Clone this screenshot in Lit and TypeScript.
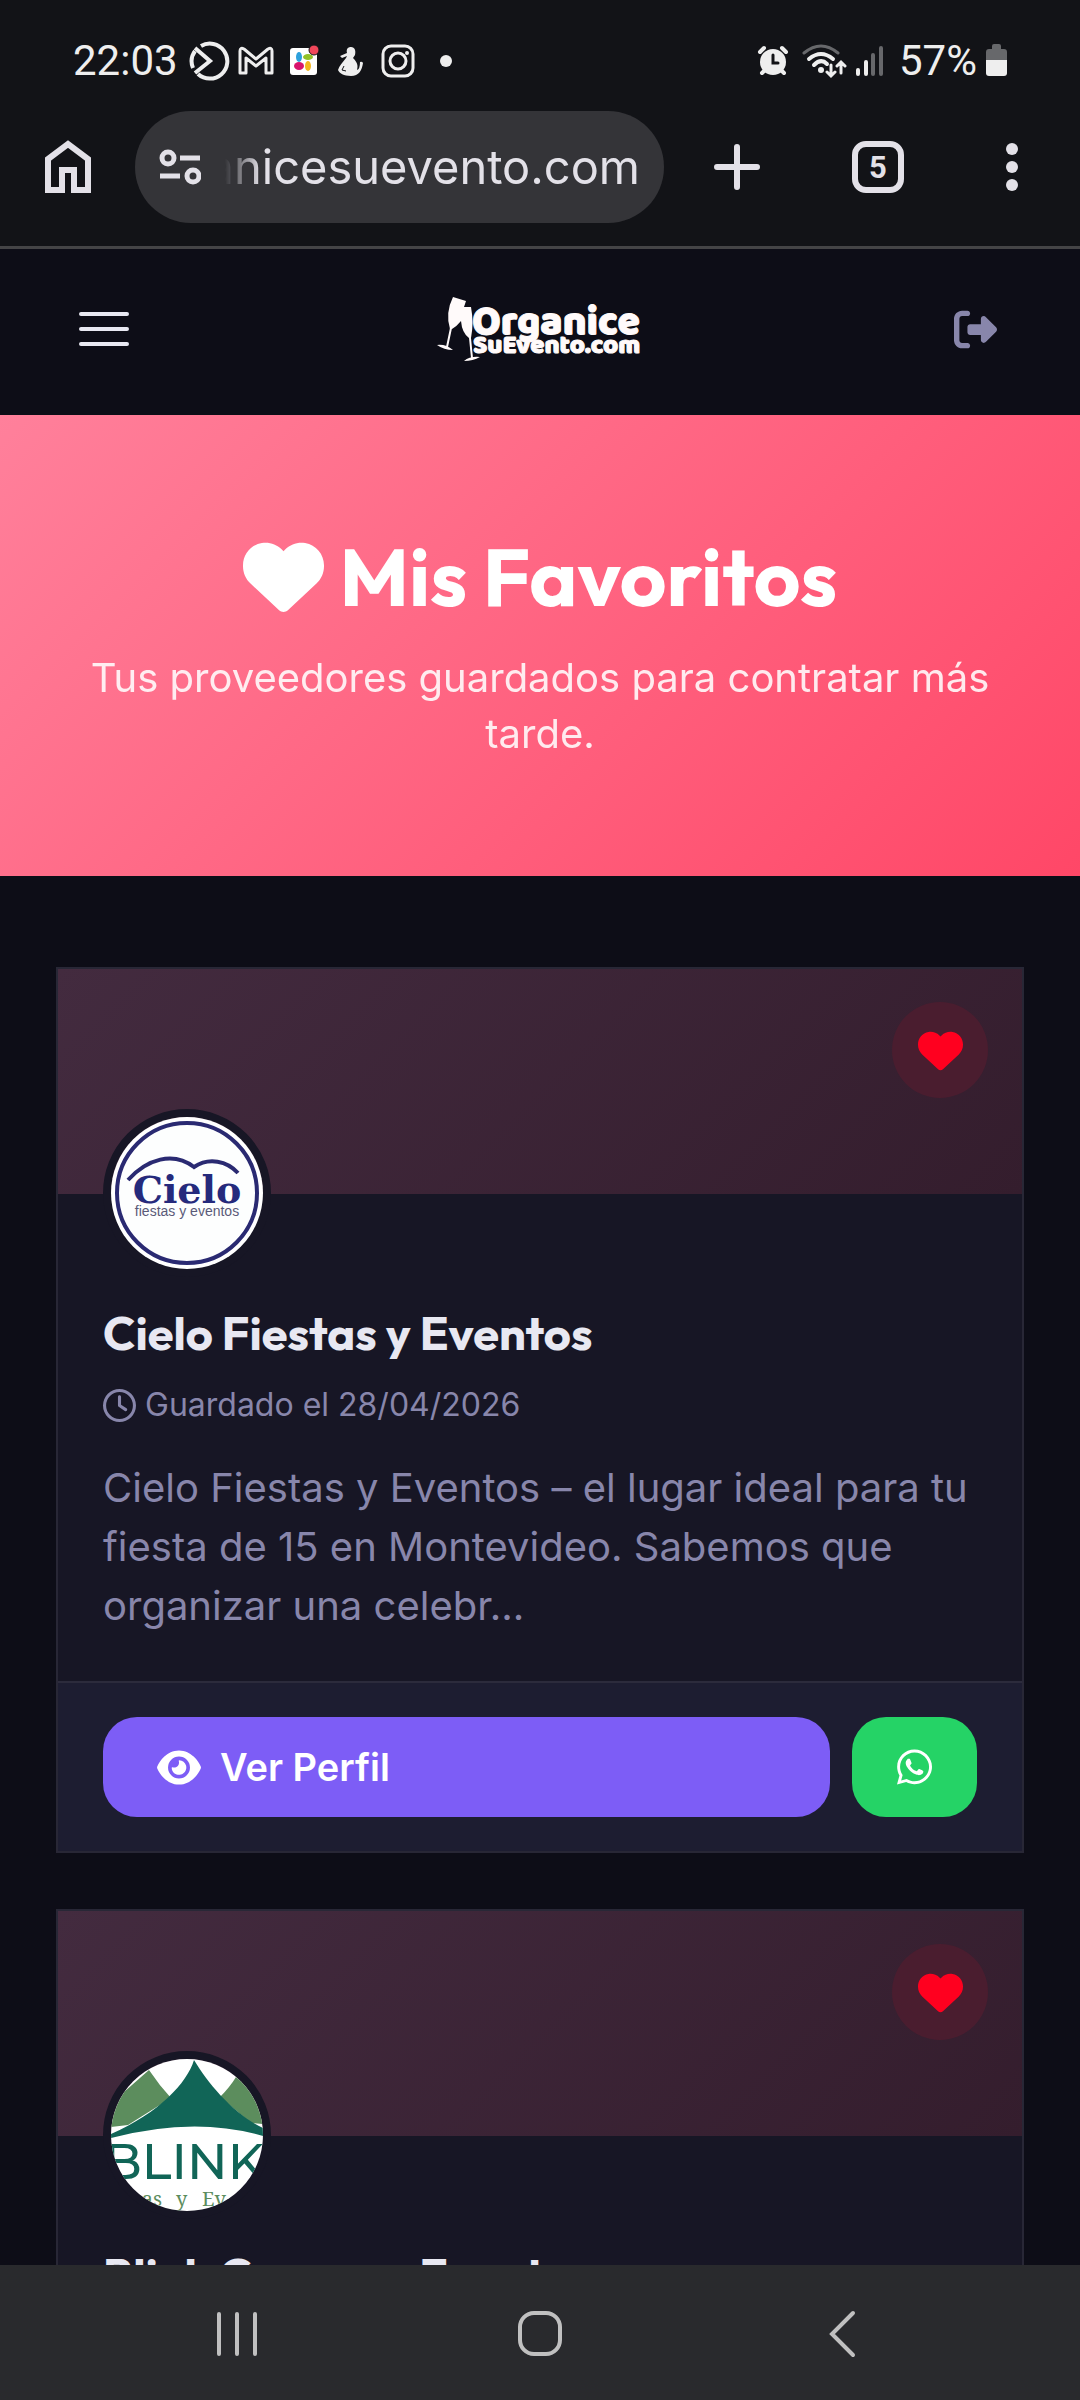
import { LitElement, css, html, svg } from "lit";
import { customElement, property } from "lit/decorators.js";

const HEART =
    "M47.6 300.4L228.3 469.1c7.5 7 17.4 10.9 27.7 10.9s20.2-3.9 27.7-10.9L464.4 300.4c30.4-28.3 47.6-68 47.6-109.5v-5.8c0-69.9-50.5-129.5-119.4-141C347 36.5 300.6 51.4 268 84L256 96 244 84c-32.6-32.6-79-47.5-124.6-39.9C50.5 55.6 0 115.2 0 185.1v5.8c0 41.5 17.2 81.2 47.6 109.5z";
const EYE =
    "M288 32c-80.8 0-145.5 36.8-192.6 80.6C48.6 156 17.3 208 2.5 243.7c-3.3 7.9-3.3 16.7 0 24.6C17.3 304 48.6 356 95.4 399.4C142.5 443.2 207.2 480 288 480s145.5-36.8 192.6-80.6c46.8-43.5 78.1-95.4 93-131.1c3.3-7.9 3.3-16.7 0-24.6c-14.9-35.7-46.2-87.7-93-131.1C433.5 68.8 368.8 32 288 32zM144 256a144 144 0 1 1 288 0 144 144 0 1 1 -288 0zm144-64c0 35.3-28.7 64-64 64c-7.1 0-13.9-1.2-20.3-3.3c-5.5-1.8-11.9 1.6-11.7 7.4c.3 6.9 1.3 13.8 3.2 20.7c13.7 51.2 66.4 81.6 117.6 67.9s81.6-66.4 67.9-117.6c-11.1-41.5-47.8-69.4-88.6-71.1c-5.8-.2-9.2 6.1-7.4 11.7c2.1 6.4 3.3 13.2 3.3 20.3z";
const WHATSAPP =
    "M380.9 97.1C339 55.1 283.2 32 223.9 32c-122.4 0-222 99.6-222 222 0 39.1 10.2 77.3 29.6 111L0 480l117.7-30.9c32.4 17.7 68.9 27 106.1 27h.1c122.3 0 224.1-99.6 224.1-222 0-59.3-25.2-115-67.1-157zm-157 341.6c-33.2 0-65.7-8.9-94-25.7l-6.7-4-69.8 18.3L72 359.2l-4.4-7c-18.5-29.4-28.2-63.3-28.2-98.2 0-101.7 82.8-184.5 184.6-184.5 49.3 0 95.6 19.2 130.4 54.1 34.8 34.9 56.2 81.2 56.1 130.5 0 101.8-84.9 184.6-186.6 184.6zm101.2-138.2c-5.5-2.8-32.8-16.2-37.9-18-5.1-1.9-8.8-2.8-12.5 2.8-3.7 5.6-14.3 18-17.6 21.8-3.2 3.7-6.5 4.2-12 1.4-32.6-16.3-54-29.1-75.5-66-5.7-9.8 5.7-9.1 16.3-30.3 1.8-3.7.9-6.9-.5-9.7-1.4-2.8-12.5-30.1-17.1-41.2-4.5-10.8-9.1-9.3-12.5-9.5-3.2-.2-6.9-.2-10.6-.2-3.7 0-9.7 1.4-14.8 6.9-5.1 5.6-19.4 19-19.4 46.3 0 27.3 19.9 53.7 22.6 57.4 2.8 3.7 39.1 59.7 94.8 83.8 35.2 15.2 49 16.5 66.6 13.9 10.7-1.6 32.8-13.4 37.4-26.4 4.6-13 4.6-24.1 3.2-26.4-1.3-2.5-5-3.9-10.5-6.6z";
const CLOCK =
    "M464 256A208 208 0 1 1 48 256a208 208 0 1 1 416 0zM0 256a256 256 0 1 0 512 0A256 256 0 1 0 0 256zM232 120l0 136c0 8 4 15.5 10.7 20l96 64c11 7.4 25.9 4.4 33.3-6.7s4.4-25.9-6.7-33.3L280 243.2 280 120c0-13.3-10.7-24-24-24s-24 10.7-24 24z";
const LOGOUT =
    "M377.9 105.9L500.7 228.7c7.2 7.2 11.3 17.1 11.3 27.3s-4.1 20.1-11.3 27.3L377.9 406.1c-6.4 6.4-15 9.9-24 9.9c-18.7 0-33.9-15.2-33.9-33.9l0-62.1-128 0c-17.7 0-32-14.3-32-32l0-64c0-17.7 14.3-32 32-32l128 0 0-62.1c0-18.7 15.2-33.9 33.9-33.9c9 0 17.6 3.6 24 9.9zM160 96L96 96c-17.7 0-32 14.3-32 32l0 256c0 17.7 14.3 32 32 32l64 0c17.7 0 32 14.3 32 32s-14.3 32-32 32l-64 0c-53 0-96-43-96-96L0 128C0 75 43 32 96 32l64 0c17.7 0 32 14.3 32 32s-14.3 32-32 32z";

interface Provider {
    id: string;
    name: string;
    saved: string;
    description: string;
}

const PROVIDERS: Provider[] = [
    {
        id: "cielo",
        name: "Cielo Fiestas y Eventos",
        saved: "28/04/2026",
        description:
            "Cielo Fiestas y Eventos – el lugar ideal para tu fiesta de 15 en Montevideo. Sabemos que organizar una celebr...",
    },
    {
        id: "blink",
        name: "Blink Carpas y Eventos",
        saved: "28/04/2026",
        description: "",
    },
];

const cieloLogo = svg`
  <rect width="152" height="152" fill="#fff" />
  <circle cx="76" cy="76" r="70" fill="#fdfefe" stroke="#2a2a72" stroke-width="4" />
  <path d="M17 63C36 42 62 34 83 50C98 40 116 44 127 56" fill="none" stroke="#2a2a72" stroke-width="4" />
  <text class="cielo" x="76" y="86" text-anchor="middle">Cielo</text>
  <text class="cieloSub" x="76" y="99" text-anchor="middle">fiestas y eventos</text>
`;

const blinkLogo = svg`
  <rect width="152" height="152" fill="#fff" />
  <path d="M38 11L13 33L0 54V68L17 66L60 39Q48 26 38 11ZM125 18Q119 28 109 38L140 64L152 65V40Z" fill="#5c8d5d" />
  <path d="M83 1C76 24 48 54 0 75V79Q84 57 152 77V69C124 56 98 26 83 1Z" fill="#116557" />
  <text class="blink" x="-7" y="120">BLINK</text>
  <text class="blinkSub" x="51" y="147" text-anchor="end">as</text>
  <text class="blinkSub" x="65" y="147">y</text>
  <text class="blinkSub" x="91" y="147">Ev</text>
`;

@customElement("provider-card")
export class ProviderCard extends LitElement {
    @property({ attribute: false }) provider!: Provider;

    static styles = [
        css`
      :host {
        display: block;
        background: #171625;
        border: 2px solid #282736;
      }
      .cover {
        display: flex;
        justify-content: flex-end;
        align-items: flex-start;
        height: 225px;
        box-sizing: border-box;
        padding: 33px 34px;
        background: linear-gradient(135deg, #432b3f, #341d2d);
      }
      .favorite {
        display: grid;
        place-items: center;
        width: 96px;
        height: 96px;
        padding: 0;
        border: 0;
        border-radius: 50%;
        background: #4a1d2f;
        color: #ff001f;
      }
      .favorite svg {
        width: 45px;
        height: 45px;
      }
      .body {
        padding: 0 45px 46px;
      }
      .avatar {
        display: block;
        position: relative;
        width: 152px;
        height: 152px;
        margin: -85px 0 0;
        border: 8px solid #171625;
        border-radius: 50%;
      }
      .name {
        margin: 26px 0 0;
        color: #e8e8f2;
        font: 700 47px/60px "Outfit", "Lato", sans-serif;
      }
      .saved {
        display: flex;
        align-items: center;
        gap: 9px;
        margin: 22px 0 0;
        font-size: 32px;
        line-height: 40px;
      }
      .saved svg {
        width: 33px;
        height: 33px;
      }
      .description {
        margin: 33px 0 0;
        font-size: 40px;
        line-height: 59px;
      }
      .actions {
        display: flex;
        gap: 22px;
        padding: 34px 45px;
        border-top: 2px solid #2c2b3c;
        background: #1d1d31;
      }
      .profile {
        display: flex;
        flex: 1;
        align-items: center;
        gap: 19px;
        height: 100px;
        padding: 0 54px;
        border-radius: 34px;
        background: #7d5df6;
        color: #fff;
        font-size: 38px;
        font-weight: 600;
        text-decoration: none;
      }
      .profile svg {
        width: 44px;
        height: 39px;
      }
      .whatsapp {
        display: grid;
        place-items: center;
        width: 125px;
        border-radius: 34px;
        background: #25d366;
        color: #fff;
      }
      .whatsapp svg {
        width: 35px;
        height: 40px;
      }
      .cielo {
        fill: #252a7c;
        font: 700 38px "DejaVu Serif", serif;
      }
      .cieloSub {
        fill: #5a5a78;
        font: 14px "Liberation Sans", sans-serif;
      }
      .blink {
        fill: #116557;
        font: 500 50px "Montserrat", "DejaVu Sans", sans-serif;
      }
      .blinkSub {
        fill: #5c8d5d;
        font: 20px "Noto Serif", "Liberation Serif", serif;
      }
    `,
    ];

    render() {
        const { id, name, saved, description } = this.provider;
        return html`
      <div class="cover">
        <button class="favorite" aria-label="Quitar de favoritos">
          <svg viewBox="0 0 512 512" fill="currentColor"><path d=${HEART} /></svg>
        </button>
      </div>
      <div class="body">
        <svg class="avatar" viewBox="0 0 152 152" role="img" aria-label=${name}>
          ${id === "cielo" ? cieloLogo : blinkLogo}
        </svg>
        <h2 class="name">${name}</h2>
        <p class="saved">
          <svg viewBox="0 0 512 512" fill="currentColor"><path d=${CLOCK} /></svg>
          Guardado el ${saved}
        </p>
        <p class="description">${description}</p>
      </div>
      <div class="actions">
        <a class="profile" href="#${id}">
          <svg viewBox="0 0 576 512" fill="currentColor"><path d=${EYE} /></svg>
          Ver Perfil
        </a>
        <a class="whatsapp" href="#whatsapp" aria-label="WhatsApp">
          <svg viewBox="0 0 448 512" fill="currentColor"><path d=${WHATSAPP} /></svg>
        </a>
      </div>
    `;
    }
}

@customElement("app-root")
export class AppRoot extends LitElement {
    static styles = [
        css`
      :host {
        display: flex;
        flex-direction: column;
        height: 100vh;
        overflow: hidden;
        background: #0d0d17;
        color: #8886ab;
        font-family: "Inter", sans-serif;
      }
      button {
        display: grid;
        place-items: center;
        padding: 0;
        border: 0;
        background: none;
        color: inherit;
        font: inherit;
      }
      .chrome {
        flex: none;
        border-bottom: 3px solid #444446;
        background: #121317;
        color: #e3e1e8;
      }
      .status {
        display: flex;
        align-items: center;
        justify-content: space-between;
        height: 51px;
        padding: 35px 71px 25px 73px;
        color: #eee;
        font: 42px/51px "Roboto", sans-serif;
      }
      .group {
        display: flex;
        align-items: center;
        gap: 8px;
      }
      .group svg {
        display: block;
      }
      .toolbar {
        display: flex;
        align-items: center;
        height: 112px;
        padding: 0 52px 23px 37px;
      }
      .url {
        display: flex;
        flex: 1;
        align-items: center;
        gap: 24px;
        min-width: 0;
        height: 112px;
        box-sizing: border-box;
        margin: 0 50px 0 36px;
        padding: 0 24px;
        border-radius: 56px;
        background: #343438;
      }
      .url svg {
        flex: none;
      }
      /* rtl keeps the end of a long address in view */
      .address {
        flex: 1;
        min-width: 0;
        padding: 0;
        border: 0;
        background: none;
        color: inherit;
        direction: rtl;
        font: 47px/60px "Inter", sans-serif;
        mask-image: linear-gradient(90deg, transparent, #000 36px);
      }
      .tools {
        display: flex;
        align-items: center;
        gap: 92px;
      }
      .tab {
        font: 700 31px "Roboto", sans-serif;
      }
      .page {
        flex: 1;
        min-height: 0;
        overflow: hidden;
      }
      .header {
        display: flex;
        align-items: center;
        justify-content: space-between;
        height: 166px;
        box-sizing: border-box;
        padding: 0 83px 6px 77px;
      }
      .brand svg {
        display: block;
      }
      .logo {
        font: 800 41px "Baloo 2", "Lato", sans-serif;
        stroke: #fffafa;
        stroke-width: 1px;
      }
      .logoSub {
        font-size: 26px;
      }
      .hero {
        padding: 113px 80px 114px;
        background: linear-gradient(135deg, #ff809b, #ff4767);
        color: #fff;
        text-align: center;
      }
      .title {
        display: flex;
        align-items: center;
        justify-content: center;
        gap: 16px;
        margin: 0;
        font: 700 81px/96px "Outfit", "Lato", sans-serif;
      }
      .title svg {
        width: 81px;
        height: 81px;
      }
      .subtitle {
        margin: 26px 0 0;
        opacity: 0.88;
        font-size: 40px;
        line-height: 56px;
      }
      .cards {
        display: grid;
        gap: 56px;
        padding: 91px 56px;
      }
      .nav {
        display: flex;
        flex: none;
        justify-content: space-between;
        align-items: center;
        height: 135px;
        padding: 0 218px 0 213px;
        background: #292a2d;
        color: #c0c0c0;
      }
    `,
    ];

    render() {
        return html`
      <div class="chrome">${this._renderStatus()} ${this._renderToolbar()}</div>
      <main class="page">
        <header class="header">
          <button aria-label="Menú">
            <svg width="52" height="36" fill="none" stroke="#e8e8f2" stroke-width="4" stroke-linecap="round">
              <path d="M4 3H50M4 18H50M4 33H50" />
            </svg>
          </button>
          <a class="brand" href="#inicio" aria-label="Organice Su Evento">
            <svg width="210" height="66" fill="#fffafa">
              <path d="M16 1L29 5L27 11H34Q37 27 34 42H32Q25 37 24 25Q20 30 15 33H13Q8 17 16 1Z" />
              <path d="M14 32L10 51M33 42L35 62" stroke="#fffafa" stroke-width="2" />
              <path d="M0 49Q9 48 16 54Q7 54 0 49ZM27 65Q33 60 43 61Q36 65 27 65Z" />
              <text class="logo" x="35" y="38">Organice</text>
              <text class="logo logoSub" x="36" y="57">SuEvento.com</text>
            </svg>
          </a>
          <button aria-label="Salir">
            <svg width="43" height="43" viewBox="0 0 512 512" fill="#8886ab"><path d=${LOGOUT} /></svg>
          </button>
        </header>
        <section class="hero">
          <h1 class="title">
            <svg viewBox="0 0 512 512" fill="currentColor"><path d=${HEART} /></svg>
            Mis Favoritos
          </h1>
          <p class="subtitle">Tus proveedores guardados para contratar más tarde.</p>
        </section>
        <section class="cards">
          ${PROVIDERS.map((p) => html`<provider-card .provider=${p}></provider-card>`)}
        </section>
      </main>
      ${this._renderNav()}
    `;
    }

    private _renderStatus() {
        return html`
      <div class="status">
        <div class="group">
          <span>22:03</span>
          <svg width="44" height="42" fill="none" stroke="#eee" stroke-width="4">
            <path d="M15 6A17.5 17.5 0 1 1 12 34M7 28A17.5 17.5 0 0 1 9 11" />
            <path d="M9 8L24 21L9 33" />
          </svg>
          <svg width="38" height="42" fill="none" stroke="#eee" stroke-width="3" stroke-linejoin="round">
            <path d="M2 33V11Q2 7 6 9L18 19L30 9Q34 7 34 11V33H28V18L18 26L8 18V33Z" />
          </svg>
          <svg width="42" height="42">
            <rect x="6" y="8" width="27" height="27" rx="3" fill="#fff" />
            <ellipse cx="15" cy="17" rx="3" ry="5" fill="#2da0dc" />
            <ellipse cx="24" cy="17" rx="5" ry="3" fill="#93c127" />
            <ellipse cx="15" cy="26" rx="5" ry="4" fill="#d8136c" />
            <ellipse cx="24" cy="26" rx="3" ry="5" fill="#f3b61f" />
            <circle cx="30" cy="10" r="5" fill="#f0475a" stroke="#121317" />
          </svg>
          <svg width="34" height="42" fill="#eee">
            <path d="M17 7C21 7 22 11 21 15L19 18C24 23 24 26 23 30Q26 29 26 22Q28 21 29 23C28 30 25 36 17 36C10 36 5 33 4 30C5 26 9 22 12 18L13 16L8 18L6 16L13 13C12 9 14 7 17 7Z" />
            <path d="M10 26L8 30L12 31" fill="none" stroke="#121317" />
          </svg>
          <svg width="44" height="42" fill="none" stroke="#eee" stroke-width="3">
            <rect x="7" y="6" width="30" height="30" rx="8" />
            <circle cx="22" cy="21" r="8" />
            <circle cx="31" cy="13" r="2" fill="#eee" stroke="none" />
          </svg>
          <svg width="36" height="42" fill="#eee"><circle cx="18" cy="21" r="6" /></svg>
        </div>
        <div class="group">
          <svg width="36" height="42" fill="#eee" stroke="#eee" stroke-width="4" stroke-linecap="round">
            <circle cx="18" cy="22" r="13" stroke="none" />
            <path d="M5 12L9 8M27 8L31 12M7 33L10 30M26 30L29 33" />
            <path d="M18 15V23H23" fill="none" stroke="#121317" stroke-width="3" />
          </svg>
          <svg width="48" height="42" fill="none" stroke="#eee" stroke-width="4" stroke-linecap="round">
            <path d="M5 13Q22 -1 39 13" stroke="#67686b" stroke-width="3" />
            <path d="M10 19Q22 9 34 19" />
            <path d="M15 25Q22 18 28 24" />
            <circle cx="22" cy="30" r="3" fill="#eee" stroke="none" />
            <path d="M32 25V35M28 32L32 36L36 32M42 33V23M38 26L42 22L46 26" stroke-width="3" />
          </svg>
          <svg width="36" height="42" fill="none" stroke="#eee" stroke-width="4" stroke-linecap="round">
            <path d="M3 30V34M11 22V34" />
            <path d="M18 15V34M26 8V34" stroke="#67686b" />
          </svg>
          <span>57%</span>
          <svg width="24" height="42">
            <path d="M7 9V6Q7 4 9 4H14Q16 4 16 6V9H19Q22 9 22 12V21H1V12Q1 9 4 9Z" fill="#67686b" />
            <path d="M1 20H22V33Q22 36 19 36H4Q1 36 1 33Z" fill="#eee" />
          </svg>
        </div>
      </div>
    `;
    }

    private _renderToolbar() {
        return html`
      <div class="toolbar">
        <button aria-label="Inicio">
          <svg width="62" height="62" fill="none" stroke="currentColor" stroke-width="6">
            <path d="M11 54V23L31 8L51 23V54H37V34H25V54Z" />
          </svg>
        </button>
        <div class="url">
          <svg width="42" height="38" fill="none" stroke="currentColor" stroke-width="5">
            <circle cx="9" cy="10" r="6" /><circle cx="34" cy="28" r="6" />
            <path d="M21 10H41M1 28H21" />
          </svg>
          <input class="address" aria-label="Dirección" value="organicesuevento.com" />
        </div>
        <div class="tools">
          <button aria-label="Nueva pestaña">
            <svg width="46" height="48" stroke="currentColor" stroke-width="6" stroke-linecap="round">
              <path d="M3 24H43M23 4V44" />
            </svg>
          </button>
          <button aria-label="Pestañas">
            <svg width="52" height="52">
              <rect x="3" y="3" width="46" height="46" rx="11" fill="none" stroke="currentColor" stroke-width="6" />
              <text class="tab" x="26" y="37" text-anchor="middle" fill="currentColor">5</text>
            </svg>
          </button>
          <button aria-label="Más opciones">
            <svg width="32" height="48" fill="currentColor">
              <circle cx="16" cy="6" r="6" /><circle cx="16" cy="24" r="6" /><circle cx="16" cy="42" r="6" />
            </svg>
          </button>
        </div>
      </div>
    `;
    }

    private _renderNav() {
        return html`
      <nav class="nav">
        <button aria-label="Recientes">
          <svg width="44" height="50" stroke="currentColor" stroke-width="4" stroke-linecap="round">
            <path d="M6 6V46M24 6V46M42 6V46" />
          </svg>
        </button>
        <button aria-label="Inicio">
          <svg width="46" height="46" fill="none" stroke="currentColor" stroke-width="4">
            <rect x="3" y="3" width="40" height="41" rx="14" />
          </svg>
        </button>
        <button aria-label="Atrás">
          <svg width="40" height="50" fill="none" stroke="currentColor" stroke-width="4" stroke-linecap="round">
            <path d="M31 5L10 26L31 47" />
          </svg>
        </button>
      </nav>
    `;
    }
}
